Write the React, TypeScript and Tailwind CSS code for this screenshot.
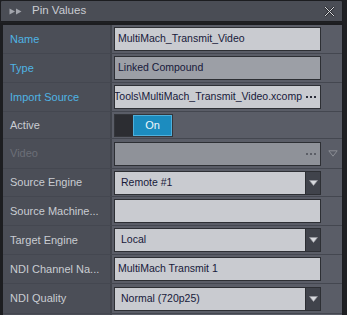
import React from 'react';

// Panneau "Pin Values" : liste de propriétés label / valeur

type Row = {
  label: string;
  tone: 'link' | 'normal' | 'disabled';
  h: string;
  kind: 'text' | 'readonly' | 'path' | 'toggle' | 'disabled' | 'select' | 'empty';
  value?: string;
};

const ROWS: Row[] = [
  { label: 'Name', tone: 'link', h: 'h-[29px]', kind: 'text', value: 'MultiMach_Transmit_Video' },
  { label: 'Type', tone: 'link', h: 'h-[29px]', kind: 'readonly', value: 'Linked Compound' },
  { label: 'Import Source', tone: 'link', h: 'h-[29px]', kind: 'path', value: 'C:\\Tools\\MultiMach_Transmit_Video.xcomp' },
  { label: 'Active', tone: 'normal', h: 'h-[27px]', kind: 'toggle' },
  { label: 'Video', tone: 'disabled', h: 'h-[30px]', kind: 'disabled' },
  { label: 'Source Engine', tone: 'normal', h: 'h-[28px]', kind: 'select', value: 'Remote #1' },
  { label: 'Source Machine...', tone: 'normal', h: 'h-[29px]', kind: 'empty' },
  { label: 'Target Engine', tone: 'normal', h: 'h-[29px]', kind: 'select', value: 'Local' },
  { label: 'NDI Channel Na...', tone: 'normal', h: 'h-[29px]', kind: 'text', value: 'MultiMach Transmit 1' },
  { label: 'NDI Quality', tone: 'normal', h: 'h-[30px]', kind: 'select', value: 'Normal (720p25)' },
  { label: '', tone: 'normal', h: 'h-[29px]', kind: 'empty' },
];

function Dots({ dim }: { dim?: boolean }) {
  return (
    <div className="flex gap-[2px] shrink-0 mr-[4px]">
      {[0, 1, 2].map(i => (
        <div key={i} className={`w-[2px] h-[2px] ${dim ? 'bg-[#5b5e66]' : 'bg-[#2a2c38]'}`} />
      ))}
    </div>
  );
}

function Arrow() {
  return (
    <div className="w-[15px] h-full bg-[#40434b] border-l border-[#2c2e33] flex items-center justify-center">
      <svg width="9" height="6" viewBox="0 0 9 6">
        <path d="M0.5 0.5 L8.5 0.5 L4.5 5.5 Z" fill="#d8dade" stroke="#9a9ca2" strokeWidth="0.6" />
      </svg>
    </div>
  );
}

function Value({ row }: { row: Row }) {
  const box = 'w-[207px] h-[24px] border border-[#2d2f34] flex items-center overflow-hidden';
  switch (row.kind) {
    case 'text':
      return (
        <div className={`${box} bg-[#c9cbd0] pl-[3px]`}>
          <span className="text-[10.5px] text-[#17193a] whitespace-nowrap">{row.value}</span>
        </div>
      );
    case 'readonly':
      return (
        <div className={`${box} bg-[#9c9fa6] pl-[3px]`}>
          <span className="text-[10.5px] text-[#17193a] whitespace-nowrap">{row.value}</span>
        </div>
      );
    case 'path':
      return (
        <div className={`${box} bg-[#c9cbd0]`}>
          <div className="flex-1 min-w-0 flex justify-end overflow-hidden">
            <span className="text-[10.5px] text-[#17193a] whitespace-nowrap shrink-0 pr-[2px]">{row.value}</span>
          </div>
          <div className="ml-[2px]">
            <Dots />
          </div>
        </div>
      );
    case 'toggle':
      return (
        <div className="h-[23px] w-[59px] flex border border-[#34363b]">
          <div className="w-[18px] h-full bg-[#2c2d32]" />
          <div className="flex-1 h-full bg-[#1c8cbf] border border-[#4fb0dc] flex items-center justify-center">
            <span className="text-[11px] text-[#eef6fb]">On</span>
          </div>
        </div>
      );
    case 'disabled':
      return (
        <div className="flex items-center">
          <div className={`${box} bg-[#8f9299] justify-end`}>
            <Dots dim />
          </div>
          <div className="ml-[7px]">
            <svg width="10" height="7" viewBox="0 0 10 7">
              <path d="M0.8 0.8 L9.2 0.8 L5 6.2 Z" fill="none" stroke="#8a8d94" strokeWidth="1" />
            </svg>
          </div>
        </div>
      );
    case 'select':
      return (
        <div className={`${box} bg-[#c9cbd0]`}>
          <span className="flex-1 pl-[6px] text-[10.5px] text-[#17193a] whitespace-nowrap">{row.value}</span>
          <Arrow />
        </div>
      );
    default:
      return <div className={`${box} bg-[#c9cbd0]`} />;
  }
}

export default function App() {
  const toneClass = {
    link: 'text-[#4fb4e4]',
    normal: 'text-[#c9ccd2]',
    disabled: 'text-[#6c6f77]',
  };

  return (
    <div
      className="w-[347px] h-[315px] overflow-hidden bg-[#1f2023] flex flex-col"
      style={{ fontFamily: '"Liberation Sans", Arial, sans-serif' }}
    >
      {/* Barre de titre */}
      <div className="w-[343px] h-[22px] shrink-0 bg-[#4a4d55] border border-[#1c1d20] rounded-t-[2px] flex items-center pl-[8px] pr-[7px]">
        <svg width="14" height="7" viewBox="0 0 14 7">
          <path d="M0.5 0.5 L6 3.5 L0.5 6.5 Z" fill="#a3a6ad" />
          <path d="M7 0.5 L12.5 3.5 L7 6.5 Z" fill="#a3a6ad" />
        </svg>
        <span className="ml-[9px] text-[11.5px] text-[#c9ccd2]">Pin Values</span>
        <div className="flex-1" />
        <svg width="11" height="11" viewBox="0 0 11 11">
          <path d="M1 1 L10 10 M10 1 L1 10" stroke="#2a2b2f" strokeWidth="2.2" />
          <path d="M1 1 L10 10 M10 1 L1 10" stroke="#d9dbdf" strokeWidth="1" />
        </svg>
      </div>

      {/* Liste des propriétés */}
      <div className="w-[343px] mt-[1px] flex-1 border-t-2 border-l-[3px] border-r border-[#1c1d20] bg-[#5a5d67] flex flex-col">
        {ROWS.map((row, i) => (
          <div key={i} className={`${row.h} shrink-0 flex border-b border-[#444750]`}>
            <div className="w-[109px] shrink-0 bg-[#4b4e57] border-r-2 border-[#41444c] flex items-center pl-[7px]">
              <span className={`text-[11px] whitespace-nowrap ${toneClass[row.tone]}`}>{row.label}</span>
            </div>
            <div className="flex-1 flex items-center pl-[2px]">
              <Value row={row} />
            </div>
          </div>
        ))}
      </div>
    </div>
  );
}
